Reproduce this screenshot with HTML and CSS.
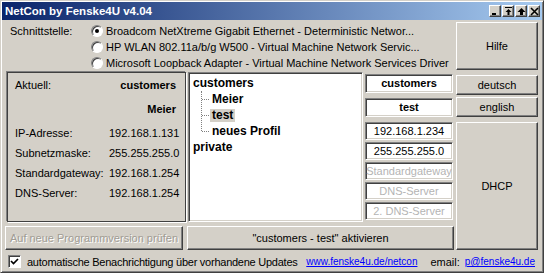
FILE: index.html
```html
<!DOCTYPE html>
<html lang="de">
<head>
<meta charset="UTF-8">
<title>NetCon by Fenske4U v4.04</title>
<link rel="stylesheet" href="styles.css">
</head>
<body>

<div class="window">
    <div class="titlebar">
        <span class="title">NetCon by Fenske4U v4.04</span>
        <div class="title-buttons">
            <span class="tbtn"><svg width="9" height="9" viewBox="0 0 9 9"><rect x="1" y="6" width="4" height="2" fill="#000"/></svg></span>
            <span class="tbtn"><svg width="9" height="9" viewBox="0 0 9 9"><rect x="1" y="0" width="7" height="1" fill="#000"/><path d="M4.5 2 L1.5 5 H3.5 V8 H5.5 V5 H7.5 Z" fill="#000"/></svg></span>
            <span class="tbtn"><svg width="9" height="9" viewBox="0 0 9 9"><path d="M4.5 1 L0.5 5 H3 V8 H6 V5 H8.5 Z" fill="#000"/></svg></span>
            <span class="tbtn"><svg width="9" height="9" viewBox="0 0 9 9"><path d="M1 1 L8 8 M8 1 L1 8" stroke="#000" stroke-width="1.6"/></svg></span>
        </div>
    </div>

    <div class="content">
        <div class="interface-row">
            <span class="interface-label">Schnittstelle:</span>
            <div class="radios">
                <div class="radio-item"><span class="radio checked"></span>Broadcom NetXtreme Gigabit Ethernet - Deterministic Networ...</div>
                <div class="radio-item"><span class="radio"></span>HP WLAN 802.11a/b/g W500 - Virtual Machine Network Servic...</div>
                <div class="radio-item"><span class="radio"></span>Microsoft Loopback Adapter - Virtual Machine Network Services Driver</div>
            </div>
        </div>
        <button class="btn help">Hilfe</button>

        <!-- current settings of the adapter -->
        <div class="current">
            <div class="cur-row gap"><span class="cur-label">Aktuell:</span><span class="cur-profile">customers</span></div>
            <div class="cur-row gap"><span class="cur-label"></span><span class="cur-profile">Meier</span></div>
            <div class="cur-row"><span class="cur-label">IP-Adresse:</span><span>192.168.1.131</span></div>
            <div class="cur-row"><span class="cur-label">Subnetzmaske:</span><span>255.255.255.0</span></div>
            <div class="cur-row"><span class="cur-label">Standardgateway:</span><span>192.168.1.254</span></div>
            <div class="cur-row"><span class="cur-label">DNS-Server:</span><span>192.168.1.254</span></div>
        </div>

        <div class="tree">
            <div class="node"><span class="node-text">customers</span></div>
            <div class="children">
                <div class="node child"><span class="node-text">Meier</span></div>
                <div class="node child"><span class="node-text selected">test</span></div>
                <div class="node child"><span class="node-text">neues Profil</span></div>
            </div>
            <div class="node"><span class="node-text">private</span></div>
        </div>

        <div class="fields">
            <div class="field bold">customers</div>
            <div class="field bold">test</div>
            <div class="field">192.168.1.234</div>
            <div class="field">255.255.255.0</div>
            <div class="field disabled">Standardgateway</div>
            <div class="field disabled">DNS-Server</div>
            <div class="field disabled">2. DNS-Server</div>
        </div>

        <div class="side-buttons">
            <button class="btn">deutsch</button>
            <button class="btn">english</button>
            <button class="btn dhcp">DHCP</button>
        </div>

        <button class="btn update" disabled>Auf neue Programmversion prüfen</button>
        <button class="btn activate">"customers - test" aktivieren</button>

        <div class="footer">
            <span class="checkbox"><svg width="9" height="9" viewBox="0 0 9 9"><path d="M1 4 L3.5 6.5 L8 2" stroke="#000" stroke-width="1.7" fill="none"/></svg></span>
            <span class="footer-text">automatische Benachrichtigung über vorhandene Updates</span>
            <a class="link web" href="#">www.fenske4u.de/netcon</a>
            <span class="email">email:</span>
            <a class="link" href="#">p@fenske4u.de</a>
        </div>
    </div>
</div>

</body>
</html>
```

FILE: styles.css
```css
body {
    margin: 0;
    padding: 0;
    font-family: "Liberation Sans", Arial, sans-serif;
    font-size: 11px;
    color: #000;
    background: #d4d0c8;
}
.window {
    width: 544px;
    height: 273px;
    box-sizing: border-box;
    padding: 1px;
    background: #d4d0c8;
    border: 1px solid;
    border-color: #d4d0c8 #404040 #404040 #d4d0c8;
    box-shadow: inset 1px 1px #fff, inset -1px -1px #808080;
}
.titlebar {
    height: 18px;
    display: flex;
    align-items: center;
    justify-content: space-between;
    padding: 0 2px 0 3px;
    background: linear-gradient(to right, #0a246a, #a6caf0);
}
.title {
    color: #fff;
    font-weight: bold;
    font-size: 11.5px;
}
.title-buttons {
    display: flex;
    gap: 1px;
}
.tbtn {
    width: 12px;
    height: 12px;
    box-sizing: border-box;
    display: flex;
    align-items: center;
    justify-content: center;
    background: #d4d0c8;
    border: 1px solid;
    border-color: #fff #404040 #404040 #fff;
    box-shadow: inset -1px -1px #808080;
}
.content {
    display: grid;
    grid-template-columns: 180px 175px 89px 82px;
    grid-template-rows: 50px 154px 27px auto;
    column-gap: 2px;
    padding: 2px 4px 0 4px;
}

/* buttons */
.btn {
    font-family: inherit;
    font-size: 11px;
    color: #000;
    background: #d4d0c8;
    border: 1px solid;
    border-color: #fff #404040 #404040 #fff;
    box-shadow: inset -1px -1px #808080;
    padding: 0;
}
.btn:disabled {
    color: #a09c94;
    text-shadow: 1px 1px #fff;
}
.help {
    grid-column: 4;
    grid-row: 1;
    height: 48px;
}

/* interface selection */
.interface-row {
    grid-column: 1 / 4;
    grid-row: 1;
    display: flex;
    padding-top: 1px;
}
.interface-label {
    width: 81px;
    padding-left: 4px;
    line-height: 16px;
}
.radio-item {
    display: flex;
    align-items: center;
    height: 16px;
    white-space: nowrap;
}
.radio {
    width: 12px;
    height: 12px;
    box-sizing: border-box;
    margin-right: 3px;
    border-radius: 50%;
    background: #fff;
    border: 1px solid;
    border-color: #808080 #fff #fff #808080;
    box-shadow: inset 1px 1px #404040;
    display: flex;
    align-items: center;
    justify-content: center;
}
.radio.checked::after {
    content: "";
    width: 4px;
    height: 4px;
    border-radius: 50%;
    background: #000;
}

/* current values panel */
.current {
    grid-column: 1;
    grid-row: 2;
    height: 150px;
    box-sizing: border-box;
    margin-left: 1px;
    padding: 2px 9px 0 7px;
    border: 1px solid #404040;
    box-shadow: 1px 1px #fff, -1px -1px #808080;
}
.cur-row {
    display: flex;
    height: 20px;
    line-height: 20px;
}
.cur-row.gap {
    margin-bottom: 4px;
}
.cur-label {
    width: 94px;
    flex: none;
}
.cur-profile {
    flex: 1;
    text-align: right;
    font-weight: bold;
}

/* profile tree */
.tree {
    grid-column: 2;
    grid-row: 2;
    height: 150px;
    box-sizing: border-box;
    padding: 2px 0 0 2px;
    background: #fff;
    border: 1px solid;
    border-color: #808080 #fff #fff #808080;
    box-shadow: inset 1px 1px #404040, inset -1px -1px #d4d0c8;
    font-weight: bold;
    font-size: 12px;
}
.node {
    height: 16px;
    display: flex;
    align-items: center;
}
.node-text {
    padding: 0 2px;
    line-height: 13px;
}
.node-text.selected {
    background: #d4d0c8;
}
.children {
    position: relative;
    margin-left: 10px;
}
.children::before {
    content: "";
    position: absolute;
    left: 0;
    top: 0;
    height: 40px;
    border-left: 1px dotted #808080;
}
.child {
    position: relative;
    padding-left: 9px;
}
.child::before {
    content: "";
    position: absolute;
    left: 1px;
    top: 8px;
    width: 7px;
    border-top: 1px dotted #808080;
}

/* edit fields */
.fields {
    grid-column: 3;
    grid-row: 2;
    display: flex;
    flex-direction: column;
    gap: 2px;
    padding-top: 2px;
}
.field {
    width: 88px;
    height: 18px;
    box-sizing: border-box;
    line-height: 16px;
    text-align: center;
    white-space: nowrap;
    overflow: hidden;
    background: #fff;
    border: 1px solid;
    border-color: #808080 #fff #fff #808080;
    box-shadow: inset 1px 1px #404040, inset -1px -1px #d4d0c8;
}
.field.bold {
    height: 19px;
    line-height: 17px;
    font-weight: bold;
    margin-bottom: 3px;
}
.field.disabled {
    color: #b4b4b4;
}

.side-buttons {
    grid-column: 4;
    grid-row: 2 / 4;
    display: flex;
    flex-direction: column;
    padding: 3px 0 3px 0;
}
.side-buttons .btn {
    height: 20px;
    margin-bottom: 2px;
}
.side-buttons .dhcp {
    flex: 1;
    margin: 3px 0 0 0;
}

.update {
    grid-column: 1;
    grid-row: 3;
    width: 178px;
    height: 24px;
    margin-left: -1px;
}
.activate {
    grid-column: 2 / 4;
    grid-row: 3;
    height: 24px;
    margin-left: -1px;
}

/* footer */
.footer {
    grid-column: 1 / 5;
    grid-row: 4;
    display: flex;
    align-items: center;
    height: 17px;
    padding: 0 3px 0 2px;
    white-space: nowrap;
}
.checkbox {
    width: 13px;
    height: 13px;
    box-sizing: border-box;
    display: flex;
    align-items: center;
    justify-content: center;
    background: #fff;
    border: 1px solid;
    border-color: #808080 #fff #fff #808080;
    box-shadow: inset 1px 1px #404040;
    margin-right: 6px;
}
.footer-text {
    letter-spacing: -0.25px;
}
.link {
    color: #0000ff;
    font-size: 10px;
    text-decoration: underline;
}
.link.web {
    margin-left: auto;
}
.email {
    margin: 0 5px 0 13px;
}
```
